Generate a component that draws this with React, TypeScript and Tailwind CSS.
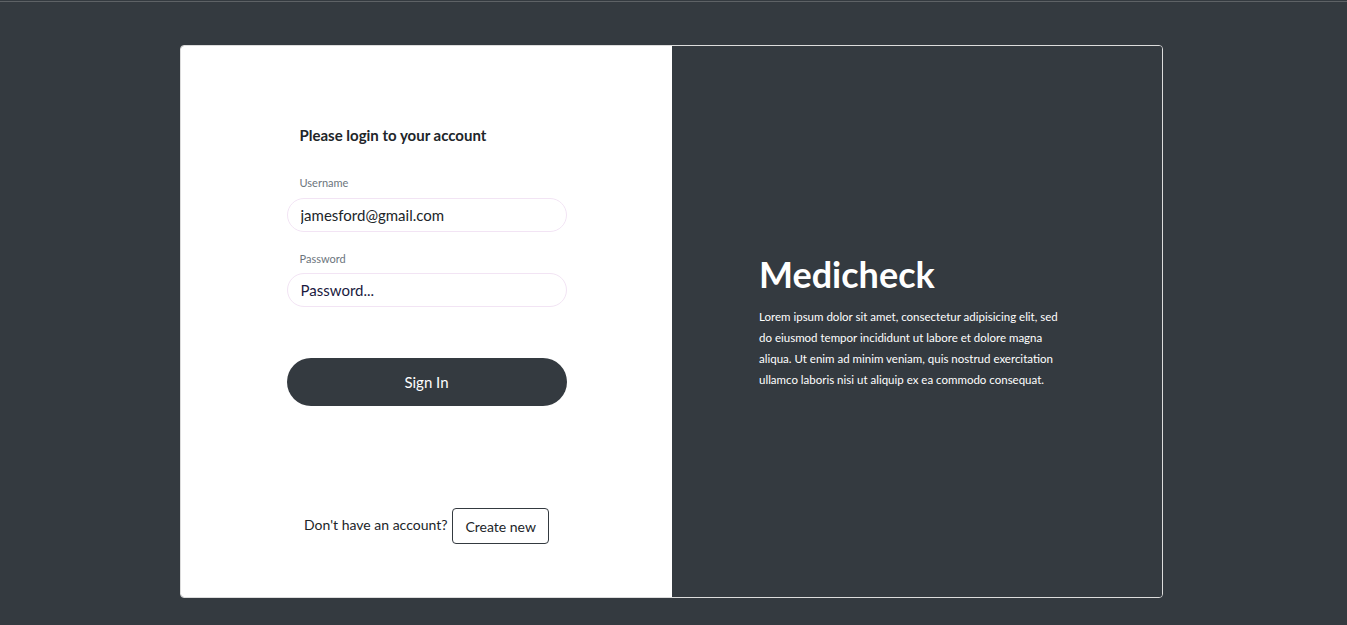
import React from "react";

const App: React.FC = () => {
  return (
    <div
      className="min-h-screen bg-[#343a40] pt-px"
      style={{ fontFamily: 'Lato, "Noto Sans", sans-serif' }}
    >
      <div className="h-px bg-[#5e6266]" />

      {/* Card */}
      <div className="mt-[43px] ml-[180px] flex h-[553px] w-[983px] overflow-hidden rounded-[4px] border border-[#dcdcdc]">
        {/* Left: login form */}
        <div className="flex w-[491px] flex-col items-center bg-white">
          <div className="mt-[79px] w-[280px]">
            <p className="px-[13px] text-[15px] leading-[21px] font-bold text-[#212529]">
              Please login to your account
            </p>

            <label className="mt-[28px] block px-[13px] text-[11px] leading-[17px] text-[#6c757d]">
              Username
            </label>
            <input
              className="mt-[7px] h-[34px] w-full rounded-full border border-[#f2e4f4] px-[13px] text-[15px] text-[#212529] outline-none"
              defaultValue="jamesford@gmail.com"
            />

            <label className="mt-[18px] block px-[13px] text-[11px] leading-[17px] text-[#6c757d]">
              Password
            </label>
            <input
              type="text"
              className="mt-[6px] h-[34px] w-full rounded-full border border-[#f2e4f4] px-[13px] text-[15px] text-[#1a1a40] outline-none"
              defaultValue="Password..."
            />

            <button className="mt-[51px] h-[48px] w-full rounded-full bg-[#343a40] text-[15px] text-white">
              Sign In
            </button>
          </div>

          <div className="mt-[102px] flex items-center">
            <p className="mr-[5px] -mt-[4px] text-[14px] text-[#212529]">
              Don't have an account?
            </p>
            <button className="h-[36px] rounded-[4px] border border-[#343a40] px-[12px] text-[14px] text-[#212529]">
              Create new
            </button>
          </div>
        </div>

        {/* Right: brand */}
        <div className="flex flex-1 flex-col justify-center bg-[#343a40] pl-[87px] text-white">
          <h1 className="text-[36px] font-bold leading-[1.2]">Medicheck</h1>
          <p className="mt-[9px] w-[312px] text-[11.5px] leading-[21px]">
            Lorem ipsum dolor sit amet, consectetur adipisicing elit, sed do
            eiusmod tempor incididunt ut labore et dolore magna aliqua. Ut enim
            ad minim veniam, quis nostrud exercitation ullamco laboris nisi ut
            aliquip ex ea commodo consequat.
          </p>
        </div>
      </div>
    </div>
  );
};

export default App;
